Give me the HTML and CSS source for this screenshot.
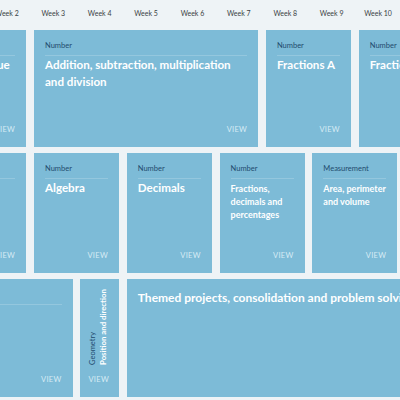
FILE: index.html
```html
<!DOCTYPE html>
<html lang="en">
<head>
    <meta charset="UTF-8">
    <meta name="viewport" content="width=device-width, initial-scale=1.0">
    <title>Year 6 scheme of learning</title>
    <link rel="stylesheet" href="styles.css">
</head>
<body>
    <div class="viewport">
        <div class="board">
            <div class="week">Week 1</div>
            <div class="week">Week 2</div>
            <div class="week">Week 3</div>
            <div class="week">Week 4</div>
            <div class="week">Week 5</div>
            <div class="week">Week 6</div>
            <div class="week">Week 7</div>
            <div class="week">Week 8</div>
            <div class="week">Week 9</div>
            <div class="week">Week 10</div>
            <div class="week">Week 11</div>
            <div class="week">Week 12</div>

            <!-- autumn -->
            <div class="card span-2">
                <div class="label">Number</div>
                <div class="title">Place value</div>
                <div class="view">VIEW</div>
            </div>
            <div class="card span-5">
                <div class="label">Number</div>
                <div class="title">Addition, subtraction, multiplication and division</div>
                <div class="view">VIEW</div>
            </div>
            <div class="card span-2">
                <div class="label">Number</div>
                <div class="title">Fractions A</div>
                <div class="view">VIEW</div>
            </div>
            <div class="card span-2">
                <div class="label">Number</div>
                <div class="title">Fractions B</div>
                <div class="view">VIEW</div>
            </div>
            <div class="card span-1">
                <div class="label">Measurement</div>
                <div class="title">Converting units</div>
                <div class="view">VIEW</div>
            </div>

            <!-- spring -->
            <div class="card span-2">
                <div class="label">Number</div>
                <div class="title">Ratio</div>
                <div class="view">VIEW</div>
            </div>
            <div class="card span-2">
                <div class="label">Number</div>
                <div class="title">Algebra</div>
                <div class="view">VIEW</div>
            </div>
            <div class="card span-2">
                <div class="label">Number</div>
                <div class="title">Decimals</div>
                <div class="view">VIEW</div>
            </div>
            <div class="card span-2">
                <div class="label">Number</div>
                <div class="title small">Fractions, decimals and percentages</div>
                <div class="view">VIEW</div>
            </div>
            <div class="card span-2">
                <div class="label">Measurement</div>
                <div class="title small">Area, perimeter and volume</div>
                <div class="view">VIEW</div>
            </div>
            <div class="card span-2">
                <div class="label">Statistics</div>
                <div class="title">Statistics</div>
                <div class="view">VIEW</div>
            </div>

            <!-- summer -->
            <div class="card span-3">
                <div class="label">Geometry</div>
                <div class="title">Shape</div>
                <div class="view">VIEW</div>
            </div>
            <div class="card span-1">
                <div class="vertical">
                    <div class="label">Geometry</div>
                    <div class="title">Position and direction</div>
                </div>
                <div class="view">VIEW</div>
            </div>
            <div class="card span-8">
                <div class="title">Themed projects, consolidation and problem solving</div>
            </div>
        </div>
    </div>
</body>
</html>
```

FILE: styles.css
```css
body {
    margin: 0;
    background-color: #eef3f6;
    font-family: Lato, "Noto Sans", sans-serif;
    overflow: hidden;
}

.viewport {
    width: 400px;
    height: 400px;
    overflow: hidden;
}

.board {
    display: grid;
    grid-template-columns: repeat(12, 38.6px);
    grid-template-rows: 24px 117px 120px 118px;
    column-gap: 7.8px;
    row-gap: 6px;
    margin-left: -58.8px;
    width: max-content;
}

.week {
    display: flex;
    align-items: center;
    justify-content: center;
    margin-bottom: -2px;
    font-size: 7px;
    color: #3a3f44;
    white-space: nowrap;
}

.card {
    display: flex;
    flex-direction: column;
    padding: 10px 11px 12px;
    background-color: #7dbbd7;
    min-width: 0;
    overflow: hidden;
}

.span-1 { grid-column: span 1; padding-left: 10px; padding-right: 10px; }
.span-2 { grid-column: span 2; }
.span-3 { grid-column: span 3; }
.span-5 { grid-column: span 5; }
.span-8 { grid-column: span 8; }

.label {
    padding-bottom: 4px;
    margin-bottom: 0;
    border-bottom: 1px solid rgba(255, 255, 255, 0.18);
    font-size: 7.5px;
    line-height: 11px;
    color: #1f4b6e;
    white-space: nowrap;
}

.title {
    font-size: 11.6px;
    line-height: 17px;
    font-weight: 700;
    color: #fff;
}

.title.small {
    padding-top: 3px;
    font-size: 9px;
    line-height: 13px;
}

.span-8 .title {
    white-space: nowrap;
    font-size: 12px;
}

.view {
    margin-top: auto;
    align-self: flex-end;
    font-size: 7.5px;
    line-height: 10px;
    letter-spacing: 0.3px;
    color: #d7ebf5;
}

.vertical {
    inline-size: max-content;
    margin-top: auto;
    margin-bottom: 10px;
    margin-left: -2px;
    writing-mode: vertical-rl;
    transform: rotate(180deg);
    align-self: flex-start;
}

.vertical + .view {
    margin-top: 0;
}

.vertical .label {
    padding: 0;
    margin: 0 0 0 1px;
    border: none;
    font-size: 7.5px;
    line-height: 9px;
}

.vertical .title {
    font-size: 7.8px;
    line-height: 10px;
    white-space: nowrap;
}
```
